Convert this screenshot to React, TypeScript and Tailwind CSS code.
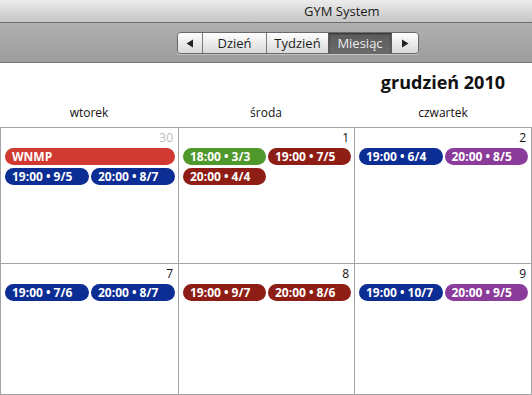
import React from "react";

type Ev = { label: string; color: string; full?: boolean };
type Cell = { day: string; muted?: boolean; events: Ev[] };

const BLUE = "bg-[#0b2d94]";
const RED = "bg-[#d03a30]";
const GREEN = "bg-[#4f992c]";
const DRED = "bg-[#8e1e15]";
const PURPLE = "bg-[#8b3c9b]";

const rows: Cell[][] = [
  [
    {
      day: "30",
      muted: true,
      events: [
        { label: "WNMP", color: RED, full: true },
        { label: "19:00 • 9/5", color: BLUE },
        { label: "20:00 • 8/7", color: BLUE },
      ],
    },
    {
      day: "1",
      events: [
        { label: "18:00 • 3/3", color: GREEN },
        { label: "19:00 • 7/5", color: DRED },
        { label: "20:00 • 4/4", color: DRED },
      ],
    },
    {
      day: "2",
      events: [
        { label: "19:00 • 6/4", color: BLUE },
        { label: "20:00 • 8/5", color: PURPLE },
      ],
    },
  ],
  [
    {
      day: "7",
      events: [
        { label: "19:00 • 7/6", color: BLUE },
        { label: "20:00 • 8/7", color: BLUE },
      ],
    },
    {
      day: "8",
      events: [
        { label: "19:00 • 9/7", color: DRED },
        { label: "20:00 • 8/6", color: DRED },
      ],
    },
    {
      day: "9",
      events: [
        { label: "19:00 • 10/7", color: BLUE },
        { label: "20:00 • 9/5", color: PURPLE },
      ],
    },
  ],
];

function Pill({ ev }: { ev: Ev }) {
  return (
    <div
      className={`${ev.color} ${ev.full ? "col-span-2" : ""} h-[17px] rounded-full pl-[7px] text-[12px] font-bold leading-[17px] text-white whitespace-nowrap overflow-hidden`}
    >
      {ev.label}
    </div>
  );
}

function DayCell({ cell, h }: { cell: Cell; h: string }) {
  return (
    <div className={`border-l border-[#a3a3a3] ${h} flex flex-col pl-[4px] pr-[3px]`}>
      <div
        className={`h-[20px] pr-[2px] pt-[3px] text-right text-[12px] leading-[14px] ${
          cell.muted ? "text-[#bdbdbd]" : "text-[#111]"
        }`}
      >
        {cell.day}
      </div>
      <div className="grid grid-cols-2 gap-x-[2px] gap-y-[3px]">
        {cell.events.map((e, i) => (
          <Pill key={i} ev={e} />
        ))}
      </div>
    </div>
  );
}

export default function App() {
  return (
    <div
      className="w-[532px] h-[395px] overflow-hidden bg-white"
      style={{ fontFamily: '"Open Sans", "Noto Sans", sans-serif' }}
    >
      {/* Title bar */}
      <div className="h-[23px] border-b border-[#6f6f6f] bg-gradient-to-b from-[#ececec] to-[#c6c6c6] flex items-center pl-[266px]">
        <span className="text-[13px] text-[#1a1a1a] leading-none pl-[38px]">GYM System</span>
      </div>
      {/* Toolbar */}
      <div className="h-[40px] border-b border-[#777] bg-gradient-to-b from-[#b0b0b0] to-[#9d9d9d] flex items-start pt-[9px] pl-[177px]">
        <div className="flex h-[22px] rounded-[4px] border border-[#6a6a6a] overflow-hidden shadow-[0_1px_0_rgba(255,255,255,0.35)] text-[13px] leading-[20px] text-[#1c1c1c]">
          <div className="w-[25px] flex items-center justify-center bg-gradient-to-b from-[#ffffff] to-[#d9d9d9] border-r border-[#7a7a7a]">
            <svg width="8" height="9" viewBox="0 0 8 9">
              <path d="M7 0.5 L0.5 4.5 L7 8.5 Z" fill="#222" />
            </svg>
          </div>
          <div className="w-[64px] text-center bg-gradient-to-b from-[#ffffff] to-[#d9d9d9] border-r border-[#7a7a7a]">Dzień</div>
          <div className="w-[62px] text-center bg-gradient-to-b from-[#ffffff] to-[#d9d9d9] border-r border-[#5a5a5a]">Tydzień</div>
          <div className="w-[63px] text-center bg-gradient-to-b from-[#5c5c5c] to-[#6a6a6a] text-[#ededed] shadow-[inset_0_1px_2px_rgba(0,0,0,0.5)] border-r border-[#5a5a5a]">Miesiąc</div>
          <div className="w-[26px] flex items-center justify-center bg-gradient-to-b from-[#ffffff] to-[#d9d9d9]">
            <svg width="8" height="9" viewBox="0 0 8 9">
              <path d="M1 0.5 L7.5 4.5 L1 8.5 Z" fill="#222" />
            </svg>
          </div>
        </div>
      </div>
      {/* Month title */}
      <div className="h-[38px] flex justify-end items-start pr-[27px] pt-[7px]">
        <span className="text-[18px] font-bold leading-[24px] text-[#111]">grudzień 2010</span>
      </div>
      {/* Day names */}
      <div className="grid grid-cols-[178px_176px_178px] h-[26px] text-[12px] text-[#111] leading-[16px]">
        <div className="text-center pt-[4px]">wtorek</div>
        <div className="text-center pt-[4px]">środa</div>
        <div className="text-center pt-[4px]">czwartek</div>
      </div>
      {/* Grid */}
      <div className="w-[532px] border-t border-r border-b border-[#a3a3a3] grid grid-cols-[178px_176px_177px]">
        {rows[0].map((c, i) => (
          <DayCell key={i} cell={c} h="h-[136px] border-b" />
        ))}
        {rows[1].map((c, i) => (
          <DayCell key={i} cell={c} h="h-[130px]" />
        ))}
      </div>
    </div>
  );
}
